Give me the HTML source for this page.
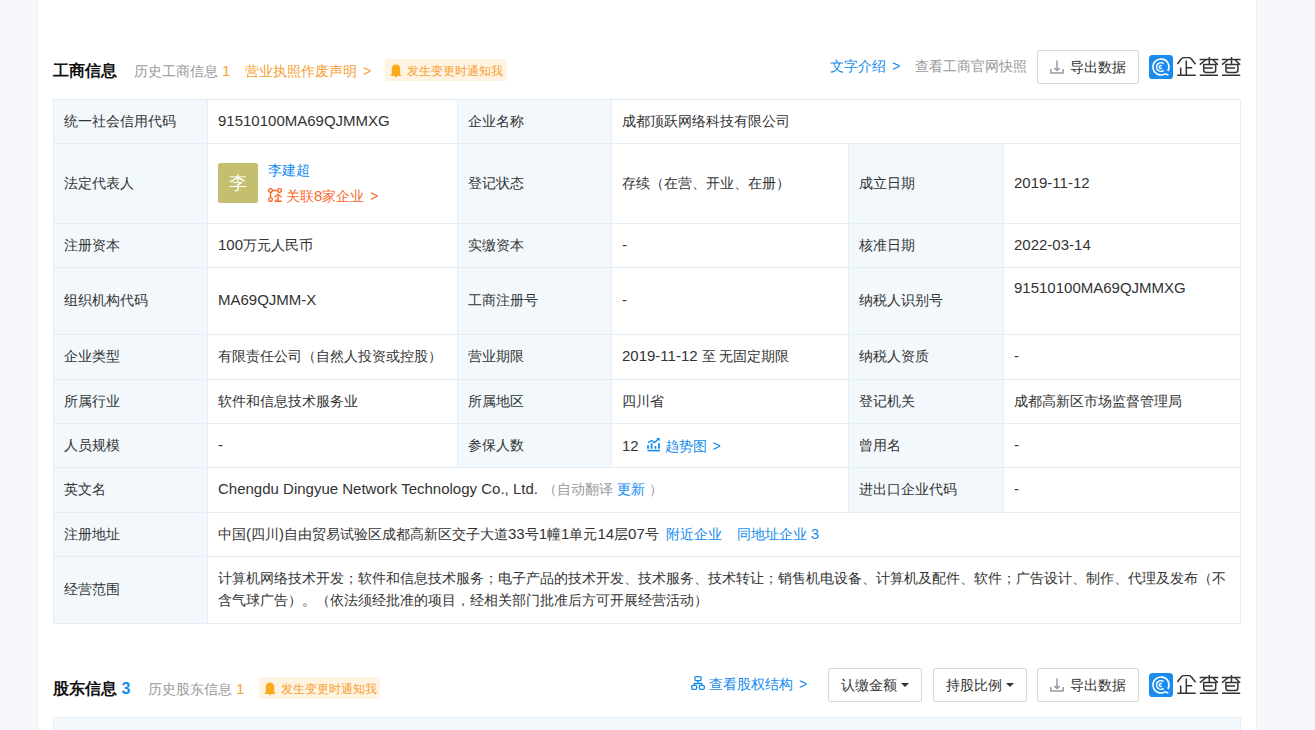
<!DOCTYPE html>
<html><head><meta charset="utf-8">
<style>
*{margin:0;padding:0;box-sizing:border-box}
html,body{width:1315px;height:730px;overflow:hidden;background:#f6f8fb;font-family:"Liberation Sans",sans-serif;color:#333;font-size:14px}
.card{position:absolute;left:37px;top:-10px;width:1220px;height:760px;background:#fff;border-left:1px solid #ececec;border-right:1px solid #ececec}
.a{position:absolute;white-space:nowrap;line-height:20px;display:flex;align-items:center}
.title{font-size:16px;font-weight:bold;color:#111}
.gray{color:#999}
.org{color:#f6a030}
.blue{color:#128bed}
.badge{position:absolute;height:22px;background:#fff4e1;border-radius:2px;color:#f6a030;font-size:12px;line-height:22px;white-space:nowrap;display:flex;align-items:center}
.btn{position:absolute;height:34px;border:1px solid #d8d8d8;border-radius:2px;background:#fff;line-height:32px;white-space:nowrap;color:#333;display:flex;align-items:center}
.tbl{position:absolute;left:53px;top:99px;width:1188px;height:525px;background:#e4eef6}
.tbl2{position:absolute;left:53px;top:717px;width:1188px;height:40px;background:#e4eef6}
.c{position:absolute;background:#fff;display:flex;align-items:center;padding-left:10px;padding-bottom:2px;white-space:nowrap;line-height:22px}
.l{background:#f2f8fc}
.en{font-size:15px;position:relative;top:0px}
.avatar{width:40px;height:40px;border-radius:2.5px;background:#c4bf6e;color:#fff;font-size:18px;padding-top:1px;display:flex;align-items:center;justify-content:center;margin-right:10px}
.legal{line-height:26px}
.rel{color:#fa6a2c;display:flex;align-items:center}
.trend{color:#128bed;display:inline-flex;align-items:center;margin-left:8px;position:relative;top:2px}
.trend svg{margin-right:4px;position:relative;top:-1px}
.scope{line-height:22px}
.caret{display:inline-block;width:0;height:0;border-left:4px solid transparent;border-right:4px solid transparent;border-top:4px solid #333;margin-left:4px}
.gt{margin-left:2px}
.logo{position:absolute;display:flex;align-items:center}
</style></head><body>
<div class="card"></div>

<!-- section 1 header -->
<div class="a title" style="left:53px;top:61px">工商信息</div>
<div class="a gray" style="left:134px;top:61px">历史工商信息&nbsp;<span class="org en">1</span></div>
<div class="a org" style="left:245px;top:61px">营业执照作废声明&nbsp;<span class="gt">&gt;</span></div>
<div class="badge" style="left:385px;top:59px;width:122px;padding-left:5px;padding-top:2px"><svg width="12" height="14" viewBox="0 0 12 14"><path d="M6 0.6C3.3 0.6 1.8 2.6 1.8 5.2V10.2L0 11.9H12L10.2 10.2V5.2C10.2 2.6 8.7 0.6 6 0.6Z" fill="#fbab1c"/><rect x="5" y="11.5" width="2" height="1.6" fill="#fbab1c"/></svg><span style="margin-left:5px">发生变更时通知我</span></div>

<div class="a blue" style="left:830px;top:56px">文字介绍&nbsp;<span class="gt">&gt;</span></div>
<div class="a gray" style="left:915px;top:56px">查看工商官网快照</div>
<div class="btn" style="left:1037px;top:50px;width:102px;padding-left:12px"><svg width="14" height="14" viewBox="0 0 14 14"><g fill="none" stroke="#9a9aa4" stroke-width="1.5"><path d="M7 0.6V10"/><path d="M4.3 8.1L7 10.4L9.7 8.1" stroke-linejoin="round"/><path d="M0.8 9V13.1H13.2V9" stroke-linejoin="round"/></g></svg><span style="margin-left:6px">导出数据</span></div>
<div class="logo" style="left:1149px;top:55px"><svg width="24" height="24" viewBox="0 0 24 24"><rect width="24" height="24" rx="3.6" fill="#1a8cf0"/><g fill="none" stroke="#fff" stroke-width="1.6"><path d="M18.93 16A8 8 0 1 0 16.12 18.86L19.4 20"/><path d="M14.55 8.61A4.3 4.3 0 1 0 14.66 15.29"/><path d="M12.76 10.77A1.5 1.5 0 1 0 12.76 13.23" stroke-width="1.5"/></g></svg><span style="margin-left:4px;display:flex"><svg width="66" height="21" viewBox="0 0 66 21"><g fill="none" stroke="#333" stroke-width="1.5"><path d="M0.45 7L4 2.2Q5.2 0.6 7 0.6H11.6Q13.4 0.6 14.6 2.2L18.5 7.2"/><path d="M9.3 3.6V18M9.3 10.8H15.2M3.7 10.5V18M0.3 18.2H18.7"/><path d="M22.60 2.4H41.40M32.30 0.1V7.2M28.90 2.75L22.80 7.7M35.80 2.75L40.90 7.7M26.70 7.5H38.70V13.1Q38.70 15.6 36.20 15.6H29.20Q26.70 15.6 26.70 13.1ZM27.20 11.1H35.80M22.80 18.2H41.00"/><path d="M44.80 2.4H63.60M54.50 0.1V7.2M51.10 2.75L45.00 7.7M58.00 2.75L63.10 7.7M48.90 7.5H60.90V13.1Q60.90 15.6 58.40 15.6H51.40Q48.90 15.6 48.90 13.1ZM49.40 11.1H58.00M45.00 18.2H63.20"/></g></svg></span></div>

<!-- table -->
<div class="tbl"></div>
<div class="c l" style="left:54px;top:100px;width:153px;height:43px;"><div>统一社会信用代码</div></div>
<div class="c" style="left:208px;top:100px;width:249px;height:43px;"><div><span class="en">91510100MA69QJMMXG</span></div></div>
<div class="c l" style="left:458px;top:100px;width:153px;height:43px;"><div>企业名称</div></div>
<div class="c" style="left:612px;top:100px;width:628px;height:43px;"><div>成都顶跃网络科技有限公司</div></div>
<div class="c l" style="left:54px;top:144px;width:153px;height:79px;"><div>法定代表人</div></div>
<div class="c" style="left:208px;top:144px;width:249px;height:79px;"><div><div style="display:flex;align-items:center;position:relative;top:0px"><div class="avatar">李</div><div class="legal"><div class="blue">李建超</div><div class="rel"><svg width="14" height="14" viewBox="0 0 14 14" style="margin-right:4px;position:relative;top:-1px"><g fill="none" stroke="#fa6a2c" stroke-width="1.4"><circle cx="2.5" cy="2.5" r="1.85"/><circle cx="11.5" cy="2.5" r="1.85"/><circle cx="2.5" cy="11.5" r="1.85"/><path d="M4.35 2.5H9.65M2.5 4.35V9.65M6.5 9.3L10 6.4L13.6 9.3M10.2 8.2V13.2M6.5 13.3H13.8"/><path d="M8.2 10.8V13.2" stroke-width="1"/></g></svg><span>关联<span class="en">8</span>家企业&nbsp;<span class="gt">&gt;</span></span></div></div></div></div></div>
<div class="c l" style="left:458px;top:144px;width:153px;height:79px;"><div>登记状态</div></div>
<div class="c" style="left:612px;top:144px;width:236px;height:79px;"><div>存续（在营、开业、在册）</div></div>
<div class="c l" style="left:849px;top:144px;width:154px;height:79px;"><div>成立日期</div></div>
<div class="c" style="left:1004px;top:144px;width:236px;height:79px;"><div><span class="en">2019-11-12</span></div></div>
<div class="c l" style="left:54px;top:224px;width:153px;height:43px;"><div>注册资本</div></div>
<div class="c" style="left:208px;top:224px;width:249px;height:43px;"><div><span class="en">100</span>万元人民币</div></div>
<div class="c l" style="left:458px;top:224px;width:153px;height:43px;"><div>实缴资本</div></div>
<div class="c" style="left:612px;top:224px;width:236px;height:43px;"><div><span class="en">-</span></div></div>
<div class="c l" style="left:849px;top:224px;width:154px;height:43px;"><div>核准日期</div></div>
<div class="c" style="left:1004px;top:224px;width:236px;height:43px;"><div><span class="en">2022-03-14</span></div></div>
<div class="c l" style="left:54px;top:268px;width:153px;height:66px;"><div>组织机构代码</div></div>
<div class="c" style="left:208px;top:268px;width:249px;height:66px;"><div><span class="en">MA69QJMM-X</span></div></div>
<div class="c l" style="left:458px;top:268px;width:153px;height:66px;"><div>工商注册号</div></div>
<div class="c" style="left:612px;top:268px;width:236px;height:66px;"><div><span class="en">-</span></div></div>
<div class="c l" style="left:849px;top:268px;width:154px;height:66px;"><div>纳税人识别号</div></div>
<div class="c" style="left:1004px;top:268px;width:236px;height:66px;align-items:flex-start;padding-top:9px"><div><span class="en">91510100MA69QJMMXG</span></div></div>
<div class="c l" style="left:54px;top:335px;width:153px;height:44px;"><div>企业类型</div></div>
<div class="c" style="left:208px;top:335px;width:249px;height:44px;"><div>有限责任公司（自然人投资或控股）</div></div>
<div class="c l" style="left:458px;top:335px;width:153px;height:44px;"><div>营业期限</div></div>
<div class="c" style="left:612px;top:335px;width:236px;height:44px;"><div><span class="en">2019-11-12</span> 至 无固定期限</div></div>
<div class="c l" style="left:849px;top:335px;width:154px;height:44px;"><div>纳税人资质</div></div>
<div class="c" style="left:1004px;top:335px;width:236px;height:44px;"><div><span class="en">-</span></div></div>
<div class="c l" style="left:54px;top:380px;width:153px;height:43px;"><div>所属行业</div></div>
<div class="c" style="left:208px;top:380px;width:249px;height:43px;"><div>软件和信息技术服务业</div></div>
<div class="c l" style="left:458px;top:380px;width:153px;height:43px;"><div>所属地区</div></div>
<div class="c" style="left:612px;top:380px;width:236px;height:43px;"><div>四川省</div></div>
<div class="c l" style="left:849px;top:380px;width:154px;height:43px;"><div>登记机关</div></div>
<div class="c" style="left:1004px;top:380px;width:236px;height:43px;"><div>成都高新区市场监督管理局</div></div>
<div class="c l" style="left:54px;top:424px;width:153px;height:43px;"><div>人员规模</div></div>
<div class="c" style="left:208px;top:424px;width:249px;height:43px;"><div><span class="en">-</span></div></div>
<div class="c l" style="left:458px;top:424px;width:153px;height:43px;"><div>参保人数</div></div>
<div class="c" style="left:612px;top:424px;width:236px;height:43px;"><div><span class="en">12</span><span class="trend"><svg width="14" height="14" viewBox="0 0 14 14"><g fill="none" stroke="#128bed" stroke-width="1.4"><path d="M0.5 12.6H13" stroke-width="1.6"/><path d="M1 7.2V10.8M4.6 5.3V10.8M8.4 8V10.8M12 5.3V10.8" stroke-width="1.8"/><path d="M1.2 4.7L4.6 2.5L7.5 4.6L11.9 0.4"/></g><path d="M9.1 -0.3H12.7V3.3Z" fill="#128bed"/></svg><span>趋势图&nbsp;<span class="gt">&gt;</span></span></span></div></div>
<div class="c l" style="left:849px;top:424px;width:154px;height:43px;"><div>曾用名</div></div>
<div class="c" style="left:1004px;top:424px;width:236px;height:43px;"><div><span class="en">-</span></div></div>
<div class="c l" style="left:54px;top:468px;width:153px;height:44px;"><div>英文名</div></div>
<div class="c" style="left:208px;top:468px;width:640px;height:44px;"><div><span class="en">Chengdu Dingyue Network Technology Co., Ltd.</span><span class="gray" style="margin-left:5px">（自动翻译 <span class="blue">更新</span> ）</span></div></div>
<div class="c l" style="left:849px;top:468px;width:154px;height:44px;"><div>进出口企业代码</div></div>
<div class="c" style="left:1004px;top:468px;width:236px;height:44px;"><div><span class="en">-</span></div></div>
<div class="c l" style="left:54px;top:513px;width:153px;height:43px;"><div>注册地址</div></div>
<div class="c" style="left:208px;top:513px;width:1032px;height:43px;"><div>中国<span class="en">(</span>四川<span class="en">)</span>自由贸易试验区成都高新区交子大道<span class="en">33</span>号<span class="en">1</span>幢<span class="en">1</span>单元<span class="en">14</span>层<span class="en">07</span>号<span class="blue" style="margin-left:7px">附近企业</span><span class="blue" style="margin-left:15px">同地址企业 <span class="en">3</span></span></div></div>
<div class="c l" style="left:54px;top:557px;width:153px;height:66px;"><div>经营范围</div></div>
<div class="c" style="left:208px;top:557px;width:1032px;height:66px;white-space:normal;padding-right:10px"><div><div class="scope">计算机网络技术开发；软件和信息技术服务；电子产品的技术开发、技术服务、技术转让；销售机电设备、计算机及配件、软件；广告设计、制作、代理及发布（不含气球广告）。（依法须经批准的项目，经相关部门批准后方可开展经营活动）</div></div></div>


<!-- section 2 header -->
<div class="a title" style="left:53px;top:679px">股东信息&nbsp;<span class="blue en" style="font-size:16px">3</span></div>
<div class="a gray" style="left:148px;top:679px">历史股东信息&nbsp;<span class="org en">1</span></div>
<div class="badge" style="left:259px;top:677px;width:121px;padding-left:5px;padding-top:2px"><svg width="12" height="14" viewBox="0 0 12 14"><path d="M6 0.6C3.3 0.6 1.8 2.6 1.8 5.2V10.2L0 11.9H12L10.2 10.2V5.2C10.2 2.6 8.7 0.6 6 0.6Z" fill="#fbab1c"/><rect x="5" y="11.5" width="2" height="1.6" fill="#fbab1c"/></svg><span style="margin-left:5px">发生变更时通知我</span></div>

<div class="a blue" style="left:690px;top:674px"><span style="display:flex;position:relative;top:-1px;left:1px"><svg width="14" height="14" viewBox="0 0 14 14"><g fill="none" stroke="#128bed" stroke-width="1.3"><rect x="3.9" y="0.7" width="6.2" height="4" rx="1.2"/><rect x="0.7" y="9.3" width="5" height="4" rx="1.2"/><rect x="8.3" y="9.3" width="5" height="4" rx="1.2"/><path d="M7 4.7V7.5M3.2 9.3V7.5H10.8V9.3"/></g></svg></span><span style="margin-left:5px">查看股权结构&nbsp;<span class="gt">&gt;</span></span></div>
<div class="btn" style="left:828px;top:668px;width:94px;padding-left:12px">认缴金额<span class="caret"></span></div>
<div class="btn" style="left:933px;top:668px;width:94px;padding-left:12px">持股比例<span class="caret"></span></div>
<div class="btn" style="left:1037px;top:668px;width:102px;padding-left:12px"><svg width="14" height="14" viewBox="0 0 14 14"><g fill="none" stroke="#9a9aa4" stroke-width="1.5"><path d="M7 0.6V10"/><path d="M4.3 8.1L7 10.4L9.7 8.1" stroke-linejoin="round"/><path d="M0.8 9V13.1H13.2V9" stroke-linejoin="round"/></g></svg><span style="margin-left:6px">导出数据</span></div>
<div class="logo" style="left:1149px;top:673px"><svg width="24" height="24" viewBox="0 0 24 24"><rect width="24" height="24" rx="3.6" fill="#1a8cf0"/><g fill="none" stroke="#fff" stroke-width="1.6"><path d="M18.93 16A8 8 0 1 0 16.12 18.86L19.4 20"/><path d="M14.55 8.61A4.3 4.3 0 1 0 14.66 15.29"/><path d="M12.76 10.77A1.5 1.5 0 1 0 12.76 13.23" stroke-width="1.5"/></g></svg><span style="margin-left:4px;display:flex"><svg width="66" height="21" viewBox="0 0 66 21"><g fill="none" stroke="#333" stroke-width="1.5"><path d="M0.45 7L4 2.2Q5.2 0.6 7 0.6H11.6Q13.4 0.6 14.6 2.2L18.5 7.2"/><path d="M9.3 3.6V18M9.3 10.8H15.2M3.7 10.5V18M0.3 18.2H18.7"/><path d="M22.60 2.4H41.40M32.30 0.1V7.2M28.90 2.75L22.80 7.7M35.80 2.75L40.90 7.7M26.70 7.5H38.70V13.1Q38.70 15.6 36.20 15.6H29.20Q26.70 15.6 26.70 13.1ZM27.20 11.1H35.80M22.80 18.2H41.00"/><path d="M44.80 2.4H63.60M54.50 0.1V7.2M51.10 2.75L45.00 7.7M58.00 2.75L63.10 7.7M48.90 7.5H60.90V13.1Q60.90 15.6 58.40 15.6H51.40Q48.90 15.6 48.90 13.1ZM49.40 11.1H58.00M45.00 18.2H63.20"/></g></svg></span></div>

<div class="tbl2"><div style="position:absolute;left:1px;top:1px;right:1px;bottom:0;background:#f2f8fc"></div><div style="position:absolute;left:56px;top:0;width:1px;height:1px;background:#fff"></div><div style="position:absolute;left:626px;top:0;width:1px;height:1px;background:#fff"></div><div style="position:absolute;left:744px;top:0;width:1px;height:1px;background:#fff"></div><div style="position:absolute;left:867px;top:0;width:1px;height:1px;background:#fff"></div><div style="position:absolute;left:1083px;top:0;width:1px;height:1px;background:#fff"></div></div>
</body></html>
